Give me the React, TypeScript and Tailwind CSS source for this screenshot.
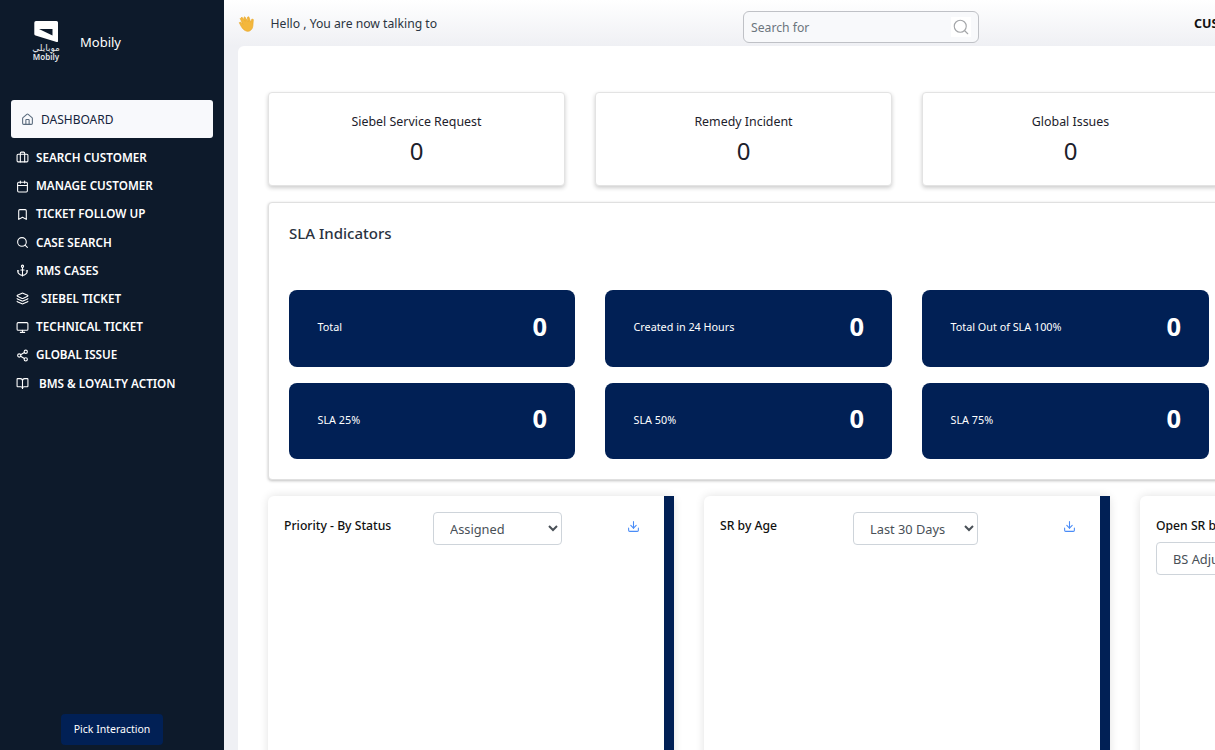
import { Anchor, Bookmark, BookOpen, Briefcase, Calendar, Download, Home, Layers, Monitor, Search, Share2 } from "lucide-react"

const font = { fontFamily: '"Noto Sans", sans-serif' }

const menu = [
  { label: "SEARCH CUSTOMER", icon: Briefcase, gap: "gap-[7px]" },
  { label: "MANAGE CUSTOMER", icon: Calendar, gap: "gap-[7px]" },
  { label: "TICKET FOLLOW UP", icon: Bookmark, gap: "gap-[7px]" },
  { label: "CASE SEARCH", icon: Search, gap: "gap-[7px]" },
  { label: "RMS CASES", icon: Anchor, gap: "gap-[7px]" },
  { label: "SIEBEL TICKET", icon: Layers, gap: "gap-[12px]" },
  { label: "TECHNICAL TICKET", icon: Monitor, gap: "gap-[7px]" },
  { label: "GLOBAL ISSUE", icon: Share2, gap: "gap-[7px]" },
  { label: "BMS & LOYALTY ACTION", icon: BookOpen, gap: "gap-[10px]" },
]

const slaCards = [
  { label: "Total", h: "h-[77px]" },
  { label: "Created in 24 Hours", h: "h-[77px]" },
  { label: "Total Out of SLA 100%", h: "h-[77px]" },
  { label: "SLA 25%", h: "h-[76px]" },
  { label: "SLA 50%", h: "h-[76px]" },
  { label: "SLA 75%", h: "h-[76px]" },
]

function Logo() {
  return (
    <div className="flex w-[26px] flex-col items-center text-white">
      <svg viewBox="0 0 24 21" className="h-[21px] w-[24px]">
        <path
          d="M2 0H22.500a1.500 1.500 0 0 1 1.500 1.500V20a1 1 0 0 1-1.400.900L1.500 14.500a1.500 1.500 0 0 1-1.200-1.500V1.700A1.700 1.700 0 0 1 2 0ZM5 8H18.500V14.500Z"
          fill="#fff"
          fillRule="evenodd"
        />
      </svg>
      <span className="mt-[1px] text-[9px] leading-[10px] text-gray-200" style={{ fontFamily: '"DejaVu Sans", sans-serif' }}>
        موبايلي
      </span>
      <span className="text-[8px] font-semibold leading-[8px] text-gray-200">Mobily</span>
    </div>
  )
}

function Hand() {
  return (
    <svg viewBox="0 0 20 20" className="h-[18px] w-[18px]">
      <path
        d="M4.500 2.500 8 7 6.500 3 7.500 2 11 7.500 10.500 2.500 12 2 14 8 15.500 4.500 17 5 16.500 12C16 16.500 13 18.500 10 18 7 17.500 5 15 3.500 12.500L1.500 8.500 2.800 7.800 5.500 10.500 2.500 4 3.500 3Z"
        fill="#f3b73d"
        stroke="#eaa92a"
        strokeWidth="0.8"
        strokeLinejoin="round"
      />
    </svg>
  )
}

function Sidebar() {
  return (
    <aside className="flex h-full w-[224px] shrink-0 flex-col bg-[#0d1a2b]">
      <div className="flex h-[100px] items-start pl-[33px] pt-[21px]">
        <Logo />
        <span className="ml-[21px] mt-[12px] text-[13px] leading-[18px] text-white">Mobily</span>
      </div>
      <div className="mx-[11px] flex h-[38px] w-[202px] items-center gap-[7px] rounded-[3px] bg-[#f8f9fc] pl-[10px] text-[12px] text-[#14233b]">
        <Home className="h-[13px] w-[13px] text-[#5a6b7d]" />
        <span className="mt-[1px]">DASHBOARD</span>
      </div>
      <nav className="mt-[5.800px] flex flex-col pl-[16px]">
        {menu.map((item) => (
          <div key={item.label} className={`flex h-[28.200px] items-center ${item.gap} text-[11.700px] font-semibold text-white`}>
            <item.icon className="h-[13px] w-[13px]" strokeWidth={2} />
            {item.label}
          </div>
        ))}
      </nav>
      <div className="mt-auto flex justify-center pb-[5px]">
        <button className="h-[31px] w-[102px] rounded-[4px] bg-[#012055] text-[10.500px] text-white">Pick Interaction</button>
      </div>
    </aside>
  )
}

function TopBar() {
  return (
    <header className="flex h-[46px] shrink-0 items-start bg-gradient-to-b from-white to-[#eff0f4]">
      <div className="ml-[14px] mt-[15px] shrink-0">
        <Hand />
      </div>
      <span className="ml-[14.500px] mt-[15px] w-[165.500px] shrink-0 whitespace-nowrap text-[12.200px] leading-[18px] text-[#2b3441]">
        Hello , You are now talking to
      </span>
      <div className="ml-[307px] mt-[11px] flex h-[32px] w-[236px] shrink-0 items-center justify-between rounded-[6px] border border-[#bfc1c6] bg-[#f8f9fb] pl-[7px] pr-[7px]">
        <span className="mt-[3px] text-[12.200px] text-[#6c757d]">Search for</span>
        <span className="flex h-[20px] w-[20px] items-center justify-center bg-white">
          <Search className="h-[18px] w-[18px] text-[#a3a5a8]" strokeWidth={1.5} />
        </span>
      </div>
      <span className="ml-[215px] mt-[15px] shrink-0 whitespace-nowrap text-[12.500px] font-bold leading-[18px] text-[#111]">CUSTOMER</span>
    </header>
  )
}

function StatCard({ title }: { title: string }) {
  return (
    <div className="flex h-[94px] w-[297px] shrink-0 flex-col items-center rounded-[4px] border border-[#e3e3e3] bg-white pt-[20px] text-[#1c212b] shadow-[0_2px_4px_rgba(0,0,0,0.2)]">
      <span className="text-[12.400px] leading-[18px]">{title}</span>
      <span className="mt-[4px] text-[24px] leading-[32px]">0</span>
    </div>
  )
}

function ChartCard({ title, value, shift }: { title: string; value: string; shift?: boolean }) {
  return (
    <div className="flex h-[300px] w-[406px] shrink-0 rounded-[6px] bg-white shadow-[0_0_10px_rgba(0,0,0,0.12)]">
      <div className="flex flex-1 items-start px-[16px] pt-[16px]">
        <span className="mt-[1px] w-[149px] whitespace-nowrap text-[12.200px] font-medium leading-[26px] text-[#111]">{title}</span>
        <select
          defaultValue={value}
          className={`h-[33px] rounded-[4px] border border-[#ced4da] bg-white pl-[12px] text-[12.800px] text-[#495057] ${shift ? "ml-[-16px] w-[125px]" : "w-[129px]"}`}
        >
          <option>{value}</option>
        </select>
        <Download className="ml-auto mr-[8px] mt-[8px] h-[13px] w-[13px] text-[#4a8cf7]" />
      </div>
      <div className="w-[10px] bg-[#012055]" />
    </div>
  )
}

export default function App() {
  return (
    <div className="flex h-screen w-screen overflow-hidden bg-white" style={font}>
      <Sidebar />
      <main className="flex min-w-0 flex-1 flex-col bg-[#eff0f4]">
        <TopBar />
        <div className="ml-[14px] w-[1100px] flex-1 overflow-hidden rounded-tl-[6px] bg-white pl-[30px] pt-[46px]">
          <div className="flex gap-[30px]">
            <StatCard title="Siebel Service Request" />
            <StatCard title="Remedy Incident" />
            <StatCard title="Global Issues" />
          </div>

          <section className="mt-[16px] h-[278px] w-[961px] rounded-[4px] border border-[#e0e0e0] bg-white px-[20px] pt-[19px] shadow-[0_1px_3px_rgba(0,0,0,0.25)]">
            <h2 className="text-[15px] font-medium leading-[22px] text-[#2a3240]">SLA Indicators</h2>
            <div className="mt-[46px] grid grid-cols-[286px_287px_287px] gap-x-[30px] gap-y-[16px]">
              {slaCards.map((c) => (
                <div key={c.label} className={`flex ${c.h} items-center justify-between rounded-[8px] bg-[#012055] pl-[28.500px] pr-[28px] text-white`}>
                  <span className="mb-[2px] text-[10.800px]">{c.label}</span>
                  <span className="mb-[4px] text-[25.500px] font-bold leading-none">0</span>
                </div>
              ))}
            </div>
          </section>

          <div className="mt-[16px] flex gap-[30px]">
            <ChartCard title="Priority - By Status" value="Assigned" />
            <ChartCard title="SR by Age" value="Last 30 Days" shift />
            <div className="h-[300px] w-[300px] shrink-0 rounded-[6px] bg-white px-[16px] pt-[16px] shadow-[0_0_10px_rgba(0,0,0,0.12)]">
              <div className="mt-[1px] whitespace-nowrap text-[12.200px] font-medium leading-[26px] text-[#111]">Open SR by Type</div>
              <select className="mt-[3px] h-[33px] w-[220px] rounded-[4px] border border-[#ced4da] bg-white pl-[12px] text-[12.800px] text-[#495057]">
                <option>BS Adjustment</option>
              </select>
            </div>
          </div>
        </div>
      </main>
    </div>
  )
}
